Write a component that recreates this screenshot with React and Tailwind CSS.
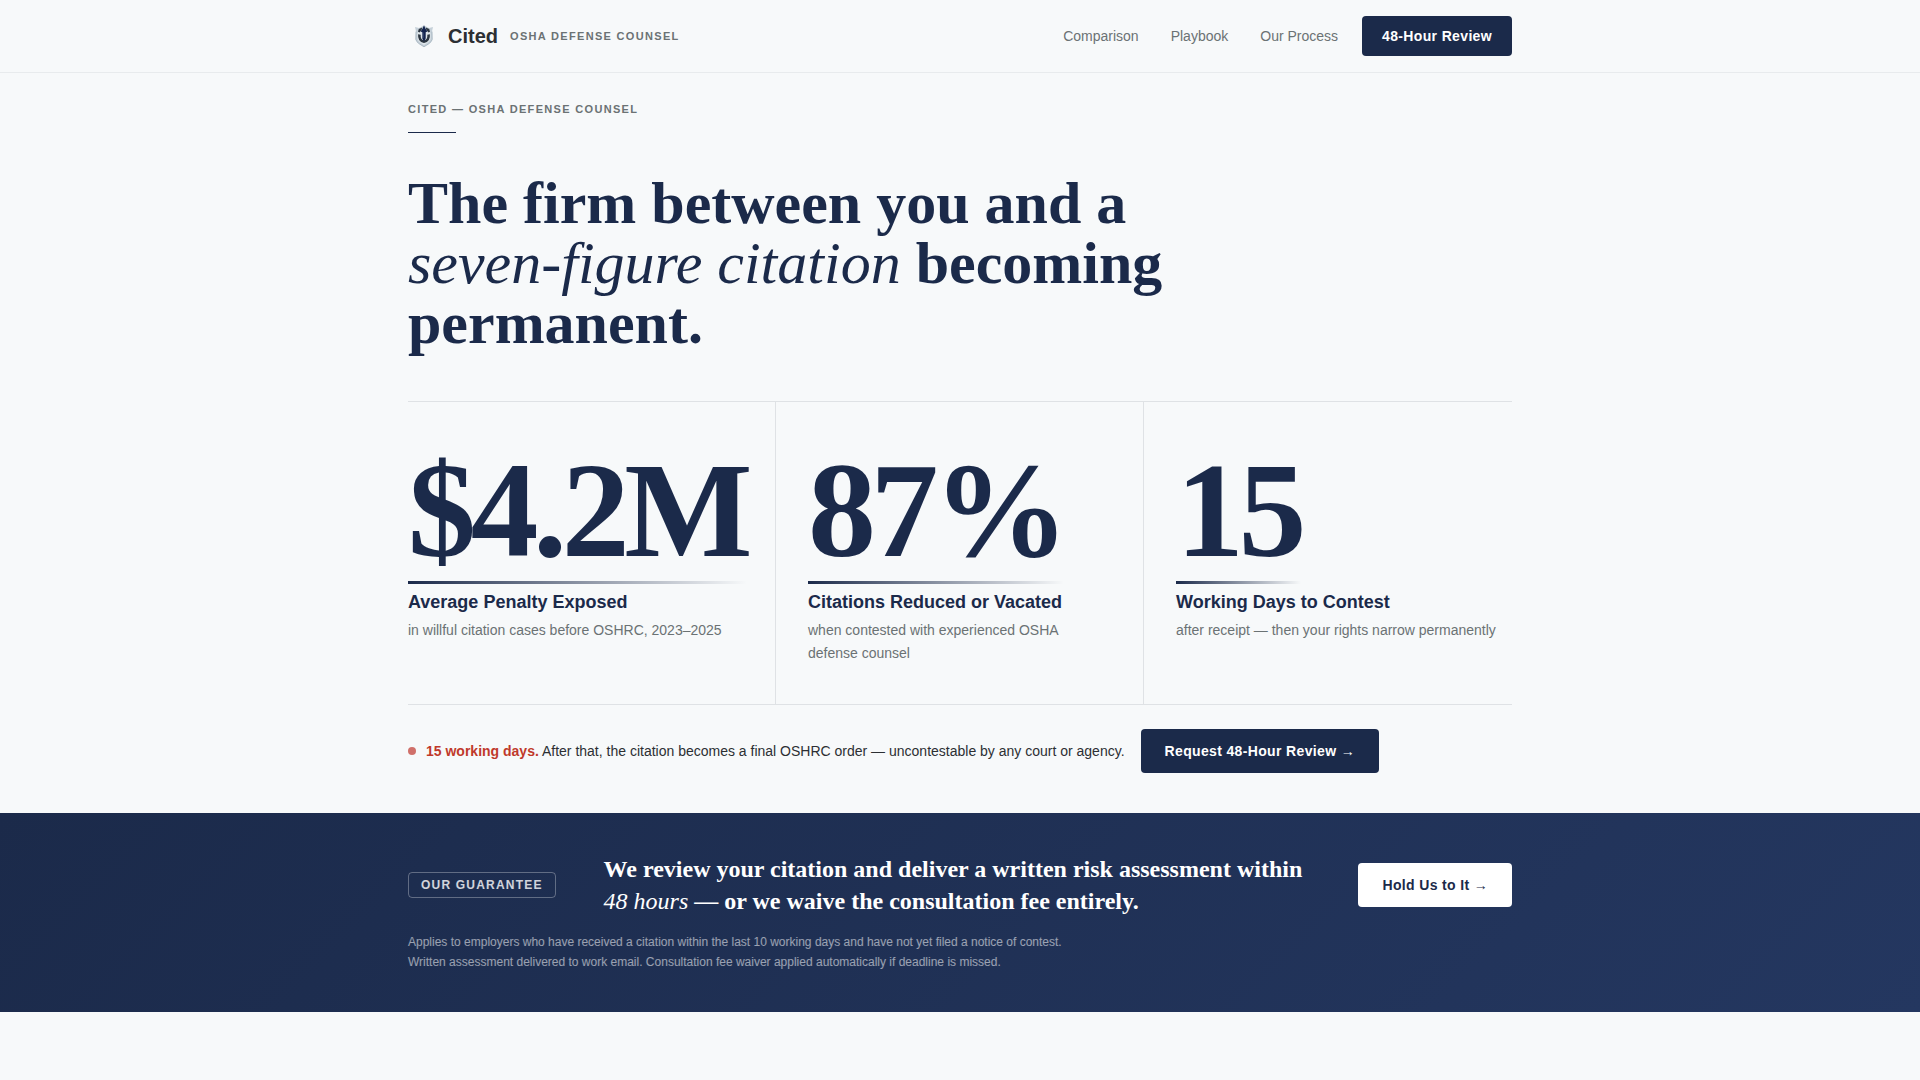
const navLinks = [
  { label: "Comparison", href: "#comparison" },
  { label: "Playbook", href: "#playbook" },
  { label: "Our Process", href: "#process" },
];

const stats = [
  {
    value: "$4.2M",
    label: "Average Penalty Exposed",
    note: "in willful citation cases before OSHRC, 2023–2025",
  },
  {
    value: "87%",
    label: "Citations Reduced or Vacated",
    note: "when contested with experienced OSHA defense counsel",
  },
  {
    value: "15",
    label: "Working Days to Contest",
    note: "after receipt — then your rights narrow permanently",
  },
];

const Logo = () => (
  <svg viewBox="0 0 32 32" className="w-8 h-8" aria-hidden="true">
    {/* silver shield */}
    <path
      d="M7 7 L11 8 L16 5.5 L21 8 L25 7 L24 11.5 L24.2 19.500 C23.200 23 19.500 24.500 16 26.800 C12.500 24.500 8.800 23 7.800 19.500 L8 11.500 Z"
      fill="#c5d0d8"
    />
    <path
      d="M9.500 13 L9.500 19 C10.800 22 13.500 23.200 16 25 C18.500 23.200 21.200 22 22.500 19 L22.500 13 L20 10 L12 10 Z"
      fill="#dfe6ea"
    />
    <path
      d="M8 11.500 L7.800 19.500 C8.800 23 12.500 24.500 16 26.800 C19.500 24.500 23.200 23 24.200 19.500 L24 11.500"
      fill="none"
      stroke="#9fb0bb"
      strokeWidth="0.8"
    />
    {/* wreath */}
    <path
      d="M11.400 14.500 C11 18.500 12.500 21.300 16 21.600 C19.500 21.300 21 18.500 20.600 14.500"
      fill="none"
      stroke="#2c3641"
      strokeWidth="2.600"
    />
    <path d="M10 11.800 L10.800 9 L14.200 7.600 L13.600 10 L11.500 12.500 Z" fill="#2c3641" />
    <path d="M22 11.800 L21.200 9 L17.800 7.600 L18.400 10 L20.500 12.500 Z" fill="#2c3641" />
    {/* blade */}
    <path
      d="M16 5.200 L17.400 8.500 L19.400 11.400 L17.700 12.200 L17.700 18.500 L16 21.500 L14.300 18.500 L14.300 12.200 L12.600 11.400 L14.600 8.500 Z"
      fill="#14244f"
    />
    <path d="M15 12.500 V18" stroke="#6f83a6" strokeWidth="0.500" />
  </svg>
);

const Header = () => (
  <header className="border-b border-[#e8ebed]">
    <div className="max-w-[1200px] mx-auto px-12 py-4 flex items-center justify-between">
      <a href="#top" className="flex items-center gap-2">
        <Logo />
        <span className="flex items-center gap-3">
          <span className="text-xl font-bold text-[#2c2f33]">Cited</span>
          <span className="text-[11px] font-bold tracking-[0.12em] uppercase text-[#6b7274]">
            OSHA Defense Counsel
          </span>
        </span>
      </a>
      <nav className="flex items-center gap-8 text-sm text-[#6b7274]">
        {navLinks.map((link) => (
          <a key={link.href} href={link.href}>
            {link.label}
          </a>
        ))}
        <a
          href="#review"
          className="-ml-2 px-5 h-10 flex items-center rounded bg-[#1b2a4a] font-bold tracking-wide text-white"
        >
          48-Hour Review
        </a>
      </nav>
    </div>
  </header>
);

const Stat = ({ value, label, note }) => (
  <div className="pt-10 pb-[39px] px-8 first:pl-0 last:pr-0 border-r last:border-r-0 border-[#dfe2e5]">
    <div className="w-fit">
      <p className="font-['Liberation_Serif',serif] font-bold text-[136px] leading-[136px] tracking-[-0.04em]">
        {value}
      </p>
      <div className="mt-[3px] h-[3px] bg-linear-to-r from-[#1b2a4a] to-transparent" />
    </div>
    <h2 className="mt-1 text-lg leading-7 font-bold">{label}</h2>
    <p className="mt-[3px] text-sm leading-[23px] text-[#6b7274]">{note}</p>
  </div>
);

const Hero = () => (
  <section className="max-w-[1200px] mx-auto px-12 pt-7 pb-10">
    <p className="text-[11px] leading-4 font-bold tracking-[0.12em] uppercase text-[#6b7274]">
      Cited — OSHA Defense Counsel
    </p>
    <div className="mt-[15px] w-12 h-px bg-[#1b2a4a]" />
    <h1 className="mt-10 max-w-[800px] font-['Liberation_Serif',serif] text-[60px] leading-[60px] font-bold">
      The firm between you and a <em className="font-normal">seven-figure citation</em> becoming
      permanent.
    </h1>

    <div className="mt-12 grid grid-cols-3 border-y border-[#dfe2e5]">
      {stats.map((stat) => (
        <Stat key={stat.value} {...stat} />
      ))}
    </div>

    <div className="mt-6 flex items-center gap-4">
      <p className="flex items-center text-sm text-[#2c2f33]">
        <span className="mr-[10px] size-2 rounded-full bg-[#d0706a]" />
        <span>
          <strong className="text-[#c0392b]">15 working days.</strong> After that, the citation
          becomes a final OSHRC order — uncontestable by any court or agency.
        </span>
      </p>
      <button className="px-6 h-11 rounded bg-[#1b2a4a] text-sm font-bold tracking-wide text-white">
        Request 48-Hour Review →
      </button>
    </div>
  </section>
);

const Guarantee = () => (
  <section className="bg-[linear-gradient(135deg,#1b2a4a,#243760)] text-white">
    <div className="max-w-[1200px] mx-auto px-12 py-10">
      <div className="flex items-center gap-12">
        <span className="shrink-0 px-3 py-1 rounded-sm border border-white/30 text-xs font-bold tracking-[0.1em] uppercase text-white/80">
          Our Guarantee
        </span>
        <p className="flex-1 font-['Liberation_Serif',serif] text-2xl leading-8 font-bold">
          We review your citation and deliver a written risk assessment within{" "}
          <em className="font-normal">48 hours</em> — or we waive the consultation fee entirely.
        </p>
        <button className="shrink-0 px-6 h-11 rounded bg-white text-sm font-bold tracking-wide text-[#1b2a4a]">
          Hold Us to It →
        </button>
      </div>
      <p className="mt-[15px] text-xs leading-5 text-white/55">
        Applies to employers who have received a citation within the last 10 working days and have
        not yet filed a notice of contest.
        <br />
        Written assessment delivered to work email. Consultation fee waiver applied automatically
        if deadline is missed.
      </p>
    </div>
  </section>
);

const App = () => {
  return (
    <div
      id="top"
      className="min-h-screen bg-[#f7f9fa] font-['Liberation_Sans',Arial,sans-serif] text-[#1b2a4a]"
    >
      <Header />
      <main>
        <Hero />
        <Guarantee />
      </main>
    </div>
  );
};

export default App;
